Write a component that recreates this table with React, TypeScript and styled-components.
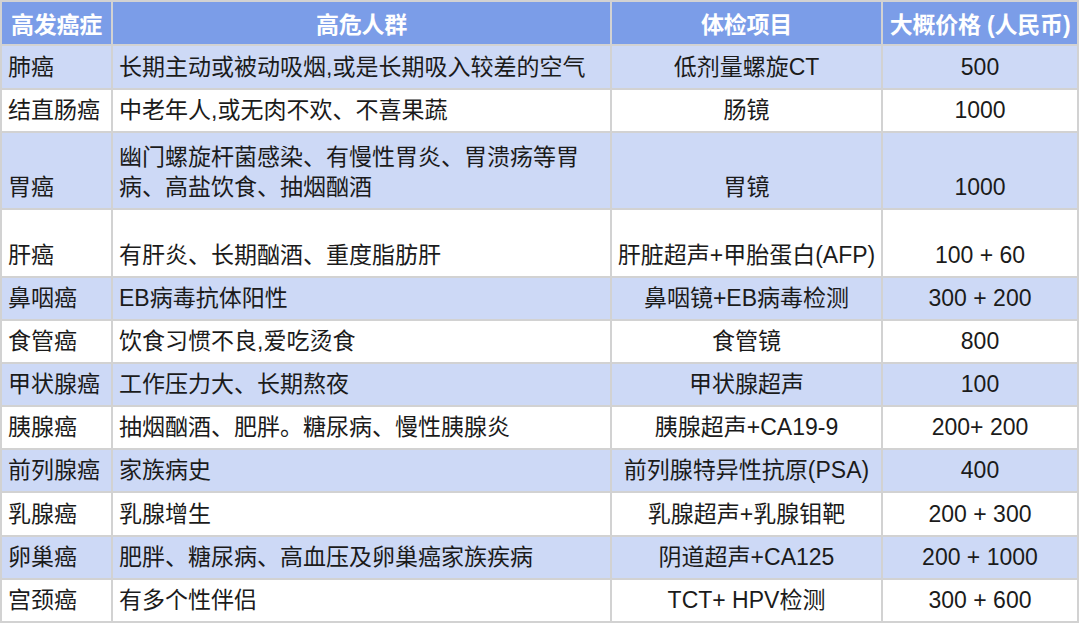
import React from "react";
import styled, { createGlobalStyle } from "styled-components";

const Global = createGlobalStyle`
  html, body { margin: 0; padding: 0; background: #ffffff; }
  body { font-family: "Liberation Sans", "Noto Sans CJK SC", sans-serif; }
`;

const COLS = "109px 497px 269px 194px";

const Table = styled.div`
  display: flex;
  flex-direction: column;
  gap: 2px;
  padding: 2px;
  width: 1079px;
  box-sizing: border-box;
  background: #d2d2d2;
`;

const Row = styled.div<{ $h: number }>`
  display: grid;
  grid-template-columns: ${COLS};
  gap: 2px;
  height: ${(p) => p.$h}px;
`;

const HeadCell = styled.div`
  background: #7b9de8;
  color: #ffffff;
  font-weight: 700;
  font-size: 23px;
  display: flex;
  align-items: center;
  justify-content: center;
  white-space: nowrap;
  letter-spacing: -0.2px;
`;

const Cell = styled.div<{ $tone: "blue" | "white"; $center?: boolean }>`
  background: ${(p) => (p.$tone === "blue" ? "#cdd9f6" : "#ffffff")};
  color: #1b1b1b;
  font-size: 23px;
  line-height: 30px;
  display: flex;
  align-items: flex-end;
  justify-content: ${(p) => (p.$center ? "center" : "flex-start")};
  text-align: ${(p) => (p.$center ? "center" : "left")};
  padding: 0 6px 6px 6px;
  box-sizing: border-box;
  white-space: nowrap;
`;

type R = { name: string; risk: React.ReactNode; check: string; price: string; h: number };

const rows: R[] = [
  { name: "肺癌", risk: "长期主动或被动吸烟,或是长期吸入较差的空气", check: "低剂量螺旋CT", price: "500", h: 42 },
  { name: "结直肠癌", risk: "中老年人,或无肉不欢、不喜果蔬", check: "肠镜", price: "1000", h: 41 },
  {
    name: "胃癌",
    risk: (
      <span>
        幽门螺旋杆菌感染、有慢性胃炎、胃溃疡等胃
        <br />
        病、高盐饮食、抽烟酗酒
      </span>
    ),
    check: "胃镜",
    price: "1000",
    h: 75,
  },
  { name: "肝癌", risk: "有肝炎、长期酗酒、重度脂肪肝", check: "肝脏超声+甲胎蛋白(AFP)", price: "100 + 60", h: 66 },
  { name: "鼻咽癌", risk: "EB病毒抗体阳性", check: "鼻咽镜+EB病毒检测", price: "300 + 200", h: 41.1 },
  { name: "食管癌", risk: "饮食习惯不良,爱吃烫食", check: "食管镜", price: "800", h: 41.1 },
  { name: "甲状腺癌", risk: "工作压力大、长期熬夜", check: "甲状腺超声", price: "100", h: 41.1 },
  { name: "胰腺癌", risk: "抽烟酗酒、肥胖。糖尿病、慢性胰腺炎", check: "胰腺超声+CA19-9", price: "200+ 200", h: 41.1 },
  { name: "前列腺癌", risk: "家族病史", check: "前列腺特异性抗原(PSA)", price: "400", h: 41.1 },
  { name: "乳腺癌", risk: "乳腺增生", check: "乳腺超声+乳腺钼靶", price: "200 + 300", h: 41.1 },
  { name: "卵巢癌", risk: "肥胖、糖尿病、高血压及卵巢癌家族疾病", check: "阴道超声+CA125", price: "200 + 1000", h: 41.1 },
  { name: "宫颈癌", risk: "有多个性伴侣", check: "TCT+ HPV检测", price: "300 + 600", h: 41.1 },
];

export default function App() {
  return (
    <>
      <Global />
      <Table>
        <Row $h={42}>
          <HeadCell>高发癌症</HeadCell>
          <HeadCell>高危人群</HeadCell>
          <HeadCell>体检项目</HeadCell>
          <HeadCell>大概价格 (人民币)</HeadCell>
        </Row>
        {rows.map((r, i) => {
          const tone = i % 2 === 0 ? "blue" : "white";
          return (
            <Row key={r.name} $h={r.h}>
              <Cell $tone={tone}>{r.name}</Cell>
              <Cell $tone={tone}>{r.risk}</Cell>
              <Cell $tone={tone} $center>
                {r.check}
              </Cell>
              <Cell $tone={tone} $center>
                {r.price}
              </Cell>
            </Row>
          );
        })}
      </Table>
    </>
  );
}
